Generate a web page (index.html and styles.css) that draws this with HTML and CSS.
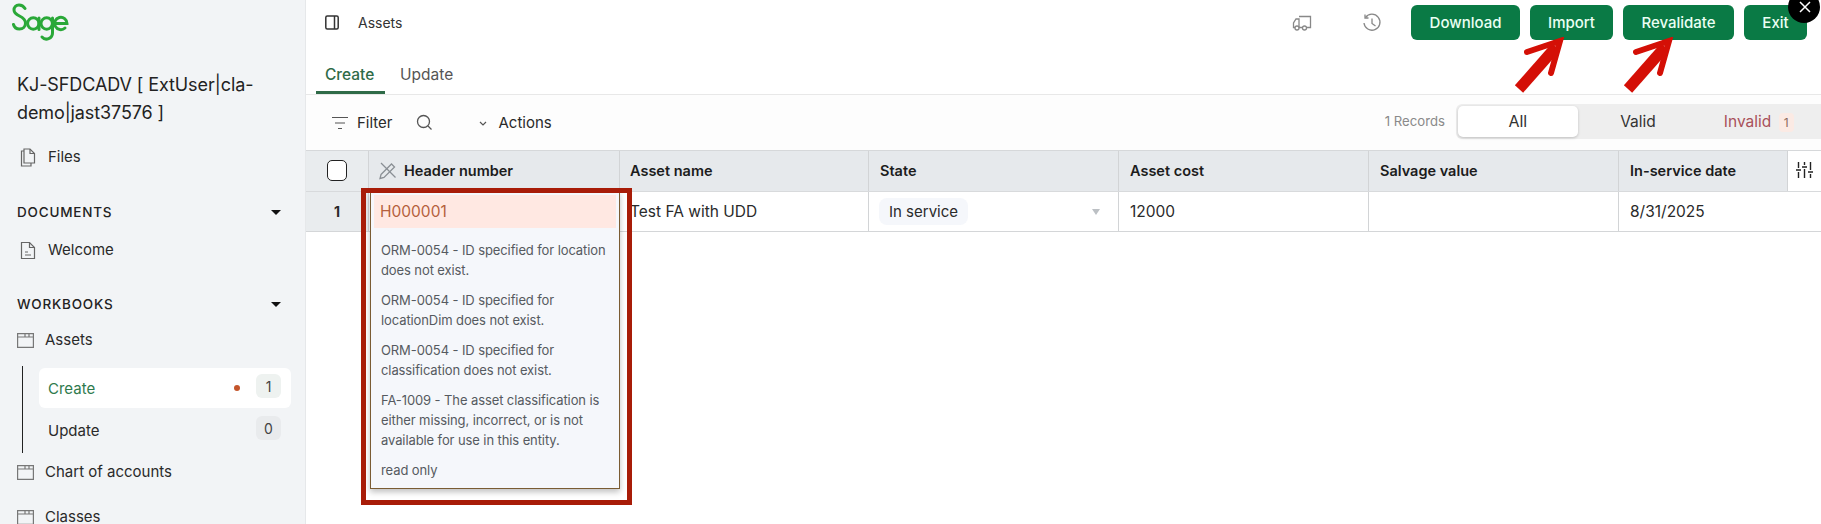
FILE: index.html
```html
<!DOCTYPE html>
<html lang="en">
<head>
<meta charset="utf-8">
<title>Assets</title>
<link rel="stylesheet" href="styles.css">
</head>
<body>
<div class="shell">
  <aside class="sidebar">
    <svg class="logo" width="60" height="42" viewBox="0 0 60 42" fill="none" stroke="#2aa838" stroke-width="3" stroke-linecap="round">
      <path d="M13 8.500C11.500 6 9 5 7 5 3.800 5 2 7.500 2 10c0 3 2.500 4.500 5.500 6 3 1.500 6 3 6 7 0 3.500-2.700 6-6 6-3 0-5.300-1.800-6-4.500"/>
      <circle cx="21.300" cy="23.500" r="5.700"/><path d="M27 18v11.500"/>
      <circle cx="34.700" cy="23.500" r="5.700"/><path d="M40.500 18v15a6 6 0 0 1-10.500 4"/>
      <path d="M43 23.500h12a6.200 6.200 0 1 0-2 4.500"/>
    </svg>
    <h1 class="title">KJ-SFDCADV [ ExtUser|cla-demo|jast37576 ]</h1>
    <a class="nav-item files">
      <svg class="ico" width="16" height="19" viewBox="0 0 16 19" fill="none" stroke="#666" stroke-width="1.200"><path d="M4 1h6l4.500 4.500V15H4z"/><path d="M10 1v4.500h4.500"/><path d="M4 3H1.500v15H11v-3"/></svg>
      <span>Files</span>
    </a>
    <div class="section docs"><span>DOCUMENTS</span><i class="caret"></i></div>
    <a class="nav-item welcome">
      <svg class="ico" width="16" height="19" viewBox="0 0 16 19" fill="none" stroke="#666" stroke-width="1.200"><path d="M1.500 1.500h8l5 5v11h-13z"/><path d="M9.500 1.500v5h5"/><path d="M5 11h3M5 14h6"/></svg>
      <span>Welcome</span>
    </a>
    <div class="section books"><span>WORKBOOKS</span><i class="caret"></i></div>
    <a class="nav-item book first">
      <svg class="ico-book" width="17" height="15" viewBox="0 0 17 15" fill="none" stroke="#777" stroke-width="1.200"><path d="M.6.600h15.800v13.800H.6zM.6 4h15.800M8 .6V4M12 .6V4"/></svg>
      <span>Assets</span>
    </a>
    <div class="subnav">
      <a class="sub active"><span class="sub-name">Create</span><i class="dot"></i><b class="count">1</b></a>
      <a class="sub"><span class="sub-name">Update</span><b class="count zero">0</b></a>
    </div>
    <a class="nav-item book chart">
      <svg class="ico-book" width="17" height="15" viewBox="0 0 17 15" fill="none" stroke="#777" stroke-width="1.200"><path d="M.6.600h15.800v13.800H.6zM.6 4h15.800M8 .6V4M12 .6V4"/></svg>
      <span>Chart of accounts</span>
    </a>
    <a class="nav-item book classes">
      <svg class="ico-book" width="17" height="15" viewBox="0 0 17 15" fill="none" stroke="#777" stroke-width="1.200"><path d="M.6.600h15.800v13.800H.6zM.6 4h15.800M8 .6V4M12 .6V4"/></svg>
      <span>Classes</span>
    </a>
  </aside>

  <main class="main">
    <header class="top">
      <div class="top-row">
        <div class="crumb">
          <svg width="14" height="15" viewBox="0 0 14 15" fill="none" stroke="#333" stroke-width="1.500"><rect x=".8" y="1" width="12.400" height="13" rx="1.500"/><path d="M9.500 1v13"/></svg>
          <span>Assets</span>
        </div>
        <div class="actions">
          <svg class="tool truck" width="20" height="18" viewBox="0 0 20 18" fill="none" stroke="#888" stroke-width="1.300"><path d="M7 2.500h11.500v11H15M10 13.500H7M3 13.500H1.500V9L4 5h3v8.500"/><circle cx="5" cy="14" r="2"/><circle cx="12.500" cy="14" r="2"/></svg>
          <svg class="tool hist" width="20" height="20" viewBox="0 0 20 20" fill="none" stroke="#888" stroke-width="1.300"><path d="M3.500 4.500A8 8 0 1 1 2 10"/><path d="M3 1.500v3.500h3.500M10 5.500V10.500l3.500 2.500"/></svg>
          <button class="btn dl">Download</button>
          <button class="btn imp">Import</button>
          <button class="btn rev">Revalidate</button>
          <button class="btn exit">Exit</button>
        </div>
      </div>
      <nav class="tabs">
        <a class="tab on">Create</a>
        <a class="tab">Update</a>
      </nav>
    </header>

    <div class="toolbar">
      <div class="tool-left">
        <svg width="16" height="14" viewBox="0 0 16 14" fill="none" stroke="#555" stroke-width="1.200"><path d="M0 1.500h16M3 7h10M6 12.500h4"/></svg>
        <span class="filter">Filter</span>
        <svg class="search" width="17" height="17" viewBox="0 0 17 17" fill="none" stroke="#555" stroke-width="1.300"><circle cx="7.500" cy="7.500" r="6"/><path d="M12 12l3.500 3.500"/></svg>
        <svg class="chev" width="8" height="6" viewBox="0 0 8 6" fill="none" stroke="#555" stroke-width="1.200"><path d="M1 1l3 3 3-3"/></svg>
        <span>Actions</span>
      </div>
      <div class="tool-right">
        <span class="records">1 Records</span>
        <div class="seg">
          <span class="seg-item all">All</span>
          <span class="seg-item">Valid</span>
          <span class="seg-item invalid">Invalid <em>1</em></span>
        </div>
      </div>
    </div>

    <div class="table">
      <div class="row head">
        <div class="c c-check"><i class="check"></i></div>
        <div class="c c-1">
          <svg width="20" height="20" viewBox="0 0 20 20" fill="none" stroke="#8a8f94" stroke-width="1.300"><path d="M3 14.500L13.500 4l3 3L6 17.500l-4 1z"/><path d="M3 3l14.500 14.500"/></svg>
          <span>Header number</span>
        </div>
        <div class="c c-2">Asset name</div>
        <div class="c c-2">State</div>
        <div class="c c-2">Asset cost</div>
        <div class="c c-2">Salvage value</div>
        <div class="c c-2">In-service date</div>
        <div class="c c-set">
          <svg width="17" height="18" viewBox="0 0 17 18" fill="none" stroke="#222" stroke-width="1.400"><path d="M2.500 1v6M2.500 11v6M8.500 1v3M8.500 8v9M14.500 1v8M14.500 13v4M0 9h5M6 6h5M12 11h5"/></svg>
        </div>
      </div>
      <div class="row body">
        <div class="c c-check num">1</div>
        <div class="c c-1"></div>
        <div class="c c-2">Test FA with UDD</div>
        <div class="c c-2 state"><span class="pill">In service</span><i class="tri"></i></div>
        <div class="c c-2">12000</div>
        <div class="c c-2"></div>
        <div class="c c-2">8/31/2025</div>
      </div>
    </div>
  </main>
</div>

<div class="pop">
  <div class="pop-cell">H000001</div>
  <div class="pop-body">
    <p>ORM-0054 - ID specified for location does not exist.</p>
    <p>ORM-0054 - ID specified for locationDim does not exist.</p>
    <p>ORM-0054 - ID specified for classification does not exist.</p>
    <p>FA-1009 - The asset classification is either missing, incorrect, or is not available for use in this entity.</p>
    <p>read only</p>
  </div>
</div>
<div class="redbox"></div>

<svg class="arrow a1" width="56" height="56" viewBox="0 0 56 56" fill="none"><path d="M5 52L42 10" stroke="#d40f06" stroke-width="11"/><path d="M13 15L46 4 37 36" stroke="#d40f06" stroke-width="6" stroke-linecap="round"/></svg>
<svg class="arrow a2" width="56" height="56" viewBox="0 0 56 56" fill="none"><path d="M5 52L42 10" stroke="#d40f06" stroke-width="11"/><path d="M13 15L46 4 37 36" stroke="#d40f06" stroke-width="6" stroke-linecap="round"/></svg>

<div class="close">
  <svg width="12" height="12" viewBox="0 0 12 12" fill="none" stroke="#fff" stroke-width="1.500"><path d="M1 1l10 10M11 1L1 11"/></svg>
</div>
</body>
</html>
```
FILE: styles.css
```css
* { box-sizing: border-box; }
html, body { margin: 0; height: 100%; overflow: hidden; background: #fff; }
body { font-family: Inter, "Liberation Sans", sans-serif; color: #222; font-size: 15px; }
a { display: flex; }
p { margin: 0; }

.shell { display: grid; grid-template-columns: 306px 1fr; height: 524px; overflow: hidden; }

/* sidebar */
.sidebar { background: #f2f4f6; border-right: 1px solid #e6e8ea; padding: 0 0 0 17px; height: 524px; overflow: hidden; display: flex; flex-direction: column; align-items: flex-start; }
.logo { margin: 0 0 0 -5px; flex: none; }
.title { font-size: 18px; line-height: 28px; font-weight: 400; color: #222; margin: 29px 0 0; width: 245px; letter-spacing: -.1px; }
.nav-item { align-items: center; color: #2a2a2a; font-size: 15px; line-height: 20px; }
.files { margin: 20px 0 0 3px; gap: 12px; }
.welcome { margin: 19px 0 0 3px; gap: 12px; }
.section { display: flex; justify-content: space-between; align-items: center; width: 264px; font-size: 13.500px; font-weight: 500; letter-spacing: .8px; color: #222; line-height: 18px; }
.docs { margin-top: 36px; }
.books { margin-top: 35px; }
.caret { width: 0; height: 0; border: 5px solid transparent; border-top: 5px solid #111; border-bottom: 0; }
.book { gap: 11px; margin-left: 0; }
.first { margin-top: 17px; }
.subnav { margin: 16px 0 0 5px; width: 268px; border-left: 1px solid #222; padding-left: 16px; height: 87px; flex: none; }
.sub { align-items: center; height: 40px; width: 252px; padding: 0 10px 0 9px; border-radius: 6px; font-size: 15px; color: #2a2a2a; margin-top: 2px; }
.sub + .sub { margin-top: 2px; }
.sub.active { background: #fff; color: #2f7a4d; }
.sub-name { flex: 1; }
.dot { width: 6px; height: 6px; border-radius: 50%; background: #c4552b; margin-right: 16px; }
.count { width: 25px; height: 24px; border-radius: 6px; background: #eef2f0; color: #444; font-weight: 400; font-size: 14px; display: flex; align-items: center; justify-content: center; margin-top: -4px; }
.count.zero { background: #e9ebed; }
.chart { margin-top: 9px; }
.classes { margin-top: 25px; }

/* main */
.main { display: flex; flex-direction: column; min-width: 0; height: 524px; }
.top { height: 95px; border-bottom: 1px solid #e8e8e8; flex: none; }
.top-row { display: flex; justify-content: space-between; align-items: flex-start; padding: 5px 14px 0 19px; height: 58px; }
.crumb { display: flex; align-items: center; gap: 19px; height: 35px; font-size: 14px; color: #333; }
.actions { display: flex; align-items: center; }
.btn { height: 35px; border: 0; border-radius: 6px; background: #0a7a45; color: #eafff3; font: 500 15px Inter, "Liberation Sans", sans-serif; padding: 0; }
.dl { width: 109px; margin-left: 29px; }
.imp { width: 83px; margin-left: 10px; }
.rev { width: 111px; margin-left: 10px; }
.exit { width: 63px; margin-left: 10px; text-align: center; }
.tool { flex: none; }
.truck { margin-right: 50px; }
.tabs { display: flex; padding-left: 10px; height: 36px; }
.tab { display: block; padding: 7px 0 0; font-size: 15.500px; line-height: 20px; color: #555; }
.tab.on { width: 69px; color: #2f6b48; border-bottom: 3px solid #2f6b48; font-weight: 500; margin-right: 15px; padding-left: 9px; height: 36px; white-space: nowrap; }

.toolbar { height: 55px; display: flex; justify-content: space-between; align-items: center; flex: none; font-size: 15px; padding: 0 0 0 26px; background: #fdfdfd; }
.tool-left { display: flex; align-items: center; color: #2a2a2a; }
.filter { margin-left: 9px; }
.search { margin-left: 23px; }
.chev { margin: 2px 12px 0 46px; }
.tool-right { display: flex; align-items: center; gap: 11px; margin-top: -2px; }
.records { font-size: 13.200px; color: #8a8a8a; margin-top: -2px; }
.seg { display: flex; width: 365px; height: 35px; background: #eeeeee; border-radius: 6px 0 0 6px; padding: 2px; align-items: center; }
.seg-item { width: 121px; text-align: center; font-size: 15.500px; color: #333; }
.all { height: 31px; line-height: 31px; background: #fff; border-radius: 5px; box-shadow: 0 1px 3px rgba(0,0,0,.2); width: 120px; font-size: 16px; }
.invalid { color: #a9505a; white-space: nowrap; }
.invalid em { font-style: normal; font-size: 12px; color: #8b6a60; background: #fbeae4; padding: 2px 5px; border-radius: 4px; margin-left: 3px; }

/* table */
.table { border-top: 1px solid #d6d8da; flex: none; }
.row { display: flex; }
.head { height: 40px; background: #e6e9ec; font-weight: 600; font-size: 14.500px; color: #1c1c1c; }
.head .c { padding-bottom: 2px; }
.body { height: 41px; border-top: 1px solid #d8dadc; border-bottom: 1px solid #d4d6d8; font-size: 15.500px; color: #2a2a2a; }
.c { border-right: 1px solid #d2d4d6; display: flex; align-items: center; padding-left: 11px; flex: none; width: 250px; }
.c-check { width: 63px; justify-content: center; padding: 0; background: #e9ecee; }
.c-1 { width: 251px; gap: 6px; padding-left: 9px; }
.c-2 { width: 250px; }
.c-2:nth-child(3) { width: 249px; padding-left: 10px; }
.head .c-2:nth-child(7) { width: 169px; }
.c-set { width: 33px; background: #fff; justify-content: center; padding: 0; border-right: 0; }
.body .c-2:last-child { width: 202px; border-right: 0; }
.check { width: 20px; height: 21px; border: 1.500px solid #222; border-radius: 5px; background: #fff; display: block; }
.num { font-weight: 700; font-size: 14px; }
.state { padding-left: 10px; justify-content: space-between; padding-right: 18px; }
.pill { background: #f5f7fb; border-radius: 8px; padding: 4px 10px; line-height: 19px; font-size: 15px; }
.tri { width: 0; height: 0; border: 4px solid transparent; border-top: 6px solid #bcc0c4; border-bottom: 0; }

/* overlays */
.pop { position: absolute; left: 370px; top: 191px; width: 250px; height: 298px; background: #f5f7fb; border: 1px solid #7a5c33; box-shadow: 0 3px 6px rgba(0,0,0,.25); padding: 3px; }
.pop-cell { height: 33px; background: #ffe8e2; color: #b5603c; font-size: 15.500px; line-height: 33px; padding-left: 6px; }
.pop-body { padding: 12px 1px 0 7px; display: flex; flex-direction: column; gap: 10px; font-size: 13px; letter-spacing: -.1px; line-height: 20px; color: #555a60; }
.redbox { position: absolute; left: 361px; top: 188px; width: 271px; height: 317px; border: 5px solid #a81c08; pointer-events: none; }
.arrow { position: absolute; top: 37px; }
.a1 { left: 1514px; }
.a2 { left: 1623px; }
.close { position: absolute; left: 1788px; top: -9px; width: 32px; height: 32px; border-radius: 50%; background: #000; display: flex; align-items: center; justify-content: center; padding: 0 0 0 1px; }
```
